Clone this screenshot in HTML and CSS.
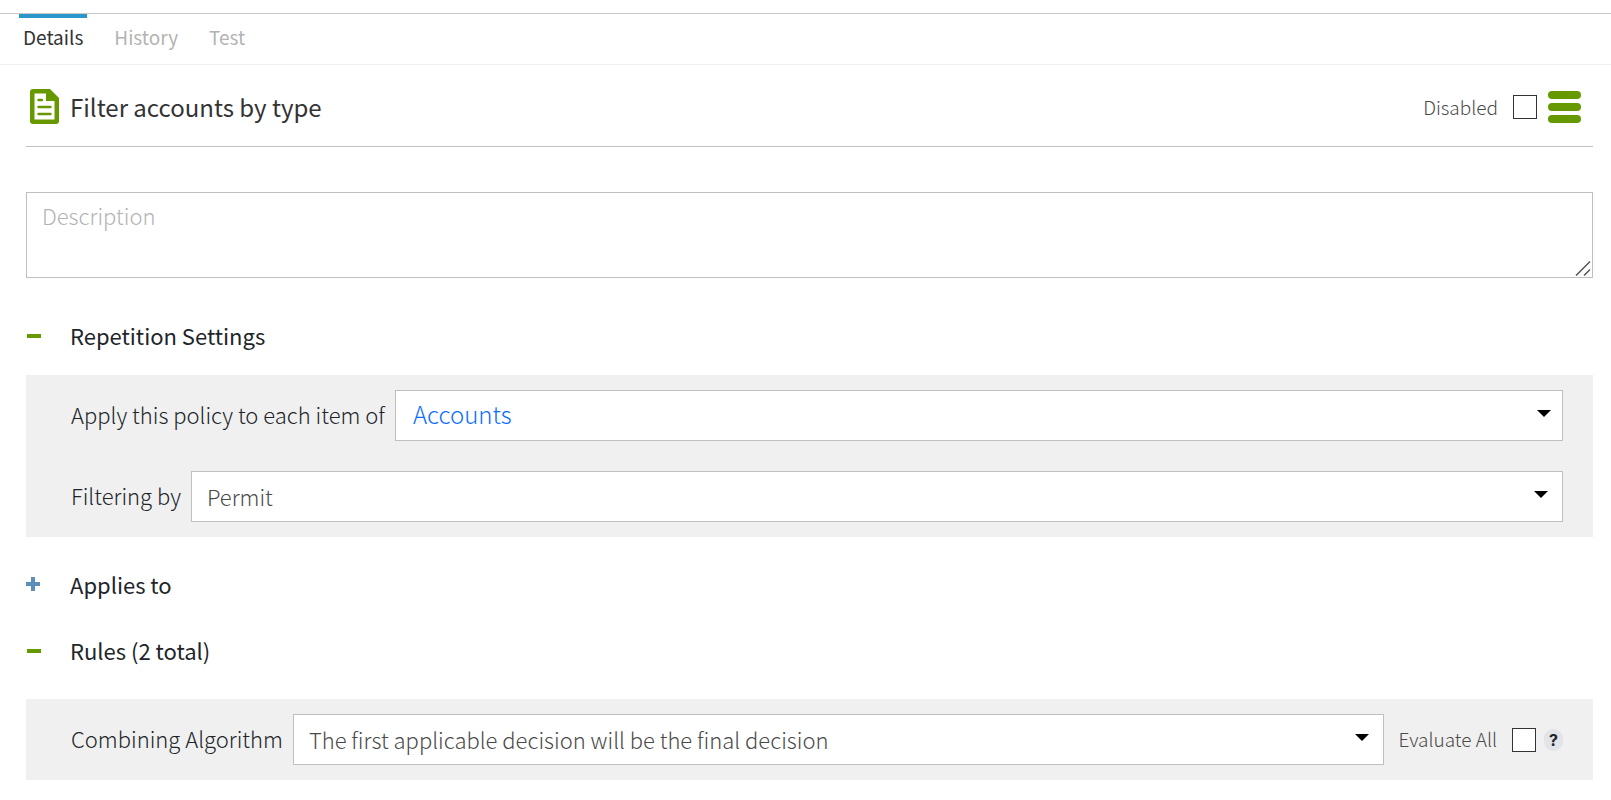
FILE: index.html
```html
<!DOCTYPE html>
<html lang="en">
<head>
  <meta charset="UTF-8">
  <title>Filter accounts by type</title>
  <link rel="stylesheet" href="styles.css">
</head>
<body>

<nav class="tabs">
  <a class="tab active" href="#details">Details</a>
  <a class="tab" href="#history">History</a>
  <a class="tab" href="#test">Test</a>
</nav>

<main class="content">
  <header class="policy-header">
    <svg class="policy-icon" width="29" height="35" viewBox="0 0 29 35">
      <path fill="#669900" d="M3 0H20L29 9V32Q29 35 26 35H3Q0 35 0 32V3Q0 0 3 0Z"/>
      <path fill="#fff" d="M4.500 4.500H16V12H24.500V30.500H4.500Z"/>
      <path stroke="#669900" stroke-width="2.400" stroke-linecap="round" d="M8.500 11H12M8.500 18H20.500M8.500 25H20.500"/>
    </svg>
    <h1 class="policy-title">Filter accounts by type</h1>
    <label class="check-label" for="disabled">Disabled</label>
    <input class="check" type="checkbox" id="disabled">
    <button class="menu-button" type="button" aria-label="Menu">
      <svg width="33" height="32" viewBox="0 0 33 32" fill="#669900">
        <rect width="33" height="8" rx="4"/>
        <rect y="12" width="33" height="8" rx="4"/>
        <rect y="24" width="33" height="8" rx="4"/>
      </svg>
    </button>
  </header>

  <div class="description-box">
    <textarea class="description" placeholder="Description" aria-label="Description"></textarea>
    <svg class="grip" width="16" height="16" viewBox="0 0 16 16" stroke="#555" stroke-width="1.500">
      <path d="M1 15.500L15 1.500M9 15.500L15 9.500"/>
    </svg>
  </div>

  <h2 class="section-title">
    <button class="toggle" type="button">
      <svg width="15" height="15" viewBox="0 0 15 15"><path fill="#669900" d="M1 6H15V10H1Z"/></svg>
      Repetition Settings
    </button>
  </h2>
  <section class="panel">
    <div class="field">
      <label for="item">Apply this policy to each item of</label>
      <div class="select-box attribute">
        <select id="item"><option>Accounts</option></select>
      </div>
    </div>
    <div class="field">
      <label for="filter">Filtering by</label>
      <div class="select-box">
        <select id="filter"><option>Permit</option><option>Deny</option></select>
      </div>
    </div>
  </section>

  <h2 class="section-title">
    <button class="toggle" type="button">
      <svg width="15" height="15" viewBox="0 0 15 15"><path fill="#5b8fb9" d="M5 0H9V5H14V9H9V14H5V9H0V5H5Z"/></svg>
      Applies to
    </button>
  </h2>

  <h2 class="section-title rules-title">
    <button class="toggle" type="button">
      <svg width="15" height="15" viewBox="0 0 15 15"><path fill="#669900" d="M1 6H15V10H1Z"/></svg>
      Rules (2 total)
    </button>
  </h2>
  <section class="panel">
    <div class="field">
      <label for="algorithm">Combining Algorithm</label>
      <div class="select-box">
        <select id="algorithm"><option>The first applicable decision will be the final decision</option></select>
      </div>
      <label class="check-label" for="evaluate">Evaluate All</label>
      <input class="check" type="checkbox" id="evaluate">
      <button class="help" type="button">?</button>
    </div>
  </section>
</main>

</body>
</html>
```

FILE: styles.css
```css
* {
  box-sizing: border-box;
}

body {
  margin: 0;
  padding-top: 13px;
  background: #fff;
  color: #212529;
  font-family: "Noto Sans CJK SC", "Noto Sans", sans-serif;
  font-size: 22px;
  font-weight: 300;
  line-height: 32px;
}

h1, h2 {
  margin: 0;
  font-weight: 400;
}

button, select, textarea {
  font: inherit;
  color: inherit;
}

button {
  padding: 0;
  border: 0;
  background: none;
  cursor: pointer;
}

svg {
  display: block;
  flex: none;
}

.tabs {
  display: flex;
  gap: 23px;
  height: 52px;
  padding-left: 19px;
  border-top: 1px solid #c8c8c8;
  border-bottom: 1px solid #f0f0f0;
}

.tab {
  padding: 3px 4px 0;
  border-top: 4px solid transparent;
  color: #b3b3b3;
  font-size: 19px;
  font-weight: 400;
  text-decoration: none;
}

.tab.active {
  border-color: #2996cc;
  color: #333;
}

.content {
  padding: 0 18px 20px 26px;
}

.policy-header {
  display: flex;
  align-items: center;
  height: 82px;
  padding: 2px 12px 0 4px;
  border-bottom: 1px solid #c0c0c0;
}

.policy-title {
  flex: 1;
  margin-left: 11px;
  color: #333;
  font-size: 24px;
}

.check-label {
  color: #4a4a4a;
  font-size: 19px;
}

.check {
  appearance: none;
  flex: none;
  width: 24px;
  height: 24px;
  margin: 0 0 0 15px;
  border: 1px solid #333;
  background: #fff;
}

.check:checked {
  background: #333;
  box-shadow: inset 0 0 0 4px #fff;
}

.menu-button {
  margin-left: 11px;
}

.description-box {
  position: relative;
  margin: 45px 0 41px;
}

.description {
  display: block;
  width: 100%;
  height: 86px;
  padding: 6px 15px;
  border: 1px solid #bfbfbf;
  outline: 0;
  resize: vertical;
}

.description::placeholder {
  color: #b3b3b3;
}

.description::-webkit-resizer {
  background: transparent;
}

.grip {
  position: absolute;
  right: 2px;
  bottom: 2px;
  pointer-events: none;
}

.section-title {
  font-size: 22px;
}

.toggle {
  display: flex;
  align-items: center;
  gap: 29px;
  height: 32px;
}

.panel {
  display: flex;
  flex-direction: column;
  gap: 30px;
  margin: 24px 0 31px;
  padding: 15px 30px 15px 45px;
  background: #f0f0f0;
}

.field {
  display: flex;
  align-items: center;
}

.field label {
  padding-bottom: 4px;
}

.select-box {
  position: relative;
  flex: 1;
  margin-left: 10px;
}

.select-box::after {
  content: "";
  position: absolute;
  top: 20px;
  right: 15px;
  border: 7px solid transparent;
  border-top-color: #000;
  border-bottom: 0;
  pointer-events: none;
}

.select-box select {
  appearance: none;
  display: block;
  width: 100%;
  height: 51px;
  padding: 0 40px 2px 15px;
  border: 1px solid #bfbfbf;
  border-radius: 0;
  background: #fff;
  color: #4a4a4a;
}

.select-box.attribute select {
  padding: 0 40px 4px 17px;
  color: #0d6efd;
  font-size: 24px;
}

.attribute::after {
  right: 12px;
}

.field .check-label {
  margin-left: 15px;
  padding-bottom: 2px;
}

.rules-title {
  margin: 34px 0 33px;
}

.help {
  width: 19px;
  height: 22px;
  margin-left: 8px;
  border-radius: 9px;
  background: #e2e4ea;
  font-family: Inter, sans-serif;
  font-size: 16px;
  font-weight: 700;
  line-height: 22px;
}
```
